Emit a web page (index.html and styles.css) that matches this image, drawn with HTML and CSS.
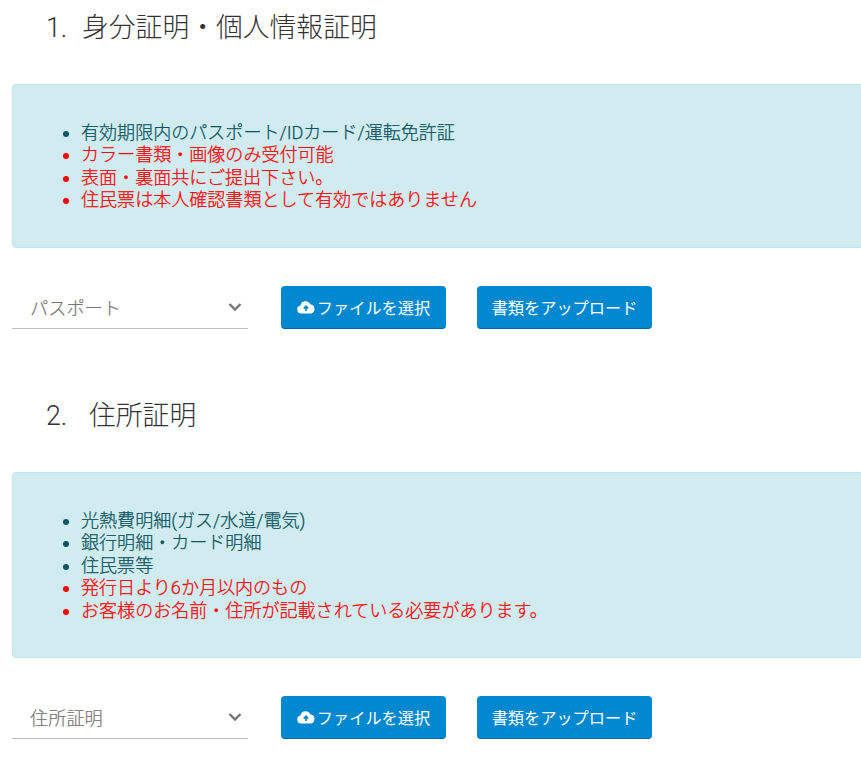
FILE: index.html
```html
<!DOCTYPE html>
<html lang="ja">
<head>
<meta charset="utf-8">
<title>本人確認書類</title>
<link rel="stylesheet" href="styles.css">
</head>
<body>
<section class="doc first">
  <h3 class="title"><span class="num one">1.</span>身分証明・個人情報証明</h3>
  <div class="alert">
    <ul>
      <li>有効期限内のパスポート/IDカード/運転免許証</li>
      <li class="red">カラー書類・画像のみ受付可能</li>
      <li class="red">表面・裏面共にご提出下さい。</li>
      <li class="red">住民票は本人確認書類として有効ではありません</li>
    </ul>
  </div>
  <div class="actions">
    <div class="select"><span>パスポート</span>
      <svg class="chev" viewBox="0 0 14 10" width="14" height="10"><path d="M1.5 2 7 7.5 12.5 2" fill="none" stroke="#757575" stroke-width="2.4"/></svg>
    </div>
    <button class="btn file"><svg viewBox="0 0 18 14" width="18" height="14"><path d="M4.2 13.5A4 4 0 0 1 3.4 5.6 5.2 5.2 0 0 1 13.300 4.300 4.700 4.700 0 0 1 14 13.500Z" fill="#fff"/><path d="M9 11V6.500M6.800 8.500 9 6.200 11.200 8.500" fill="none" stroke="#0288d1" stroke-width="1.700"/></svg>ファイルを選択</button>
    <button class="btn upload">書類をアップロード</button>
  </div>
</section>
<section class="doc">
  <h3 class="title"><span class="num two">2.</span>住所証明</h3>
  <div class="alert">
    <ul>
      <li>光熱費明細(ガス/水道/電気)</li>
      <li>銀行明細・カード明細</li>
      <li>住民票等</li>
      <li class="red">発行日より6か月以内のもの</li>
      <li class="red">お客様のお名前・住所が記載されている必要があります。</li>
    </ul>
  </div>
  <div class="actions">
    <div class="select"><span>住所証明</span>
      <svg class="chev" viewBox="0 0 14 10" width="14" height="10"><path d="M1.5 2 7 7.5 12.5 2" fill="none" stroke="#757575" stroke-width="2.4"/></svg>
    </div>
    <button class="btn file"><svg viewBox="0 0 18 14" width="18" height="14"><path d="M4.2 13.5A4 4 0 0 1 3.4 5.6 5.2 5.2 0 0 1 13.300 4.300 4.700 4.700 0 0 1 14 13.500Z" fill="#fff"/><path d="M9 11V6.500M6.800 8.500 9 6.200 11.200 8.500" fill="none" stroke="#0288d1" stroke-width="1.700"/></svg>ファイルを選択</button>
    <button class="btn upload">書類をアップロード</button>
  </div>
</section>
</body>
</html>
```
FILE: styles.css
```css
html, body { margin: 0; padding: 0; background: #fff; overflow: hidden; height: 766px; }
body {
  font-family: Roboto, "Noto Sans CJK JP", sans-serif;
  color: #333;
  width: 861px;
}
.doc { padding-left: 12px; margin-bottom: 67px; }
.doc:last-child { margin-bottom: 0; }
.doc.first { padding-top: 8px; }
.title {
  margin: 0 0 36px;
  padding: 0 0 0 34px;
  font-size: 26.8px;
  font-weight: 300;
  line-height: 40px;
  color: #333;
  display: flex;
}
.num { display: block; }
.one { width: 36px; }
.two { width: 43px; }
.alert {
  box-sizing: border-box;
  width: 860px;
  background: #d1ecf1;
  border: 1px solid #bee5eb;
  border-radius: 4px;
  color: #0c5460;
  padding: 37px 20px 35.4px;
}
.alert ul {
  margin: 0;
  padding: 0 0 0 48px;
  font-size: 18.06px;
  line-height: 22.4px;
  font-weight: 300;
  -webkit-text-stroke: 0.25px currentColor;
}
.red { color: #f00; }
.actions { display: flex; align-items: flex-start; margin-top: 38px; }
.select {
  box-sizing: border-box;
  width: 236px;
  height: 43px;
  margin-right: 33px;
  padding: 0 6px 0 18px;
  border-bottom: 1px solid #bdbdbd;
  display: flex;
  align-items: center;
  justify-content: space-between;
  font-size: 18.2px;
  font-weight: 300;
  -webkit-text-stroke: 0.2px currentColor;
  color: #757575;
}
.btn {
  box-sizing: border-box;
  height: 43px;
  border: 0;
  border-bottom: 1px solid #01699f;
  border-radius: 4px;
  background: #0288d1;
  color: #fff;
  font-family: inherit;
  font-size: 16.2px;
  padding: 0;
  display: flex;
  align-items: center;
  justify-content: center;
}
.btn svg { margin-right: 2px; }
.file { width: 165px; margin-right: 31px; }
.upload { width: 175px; }
```
